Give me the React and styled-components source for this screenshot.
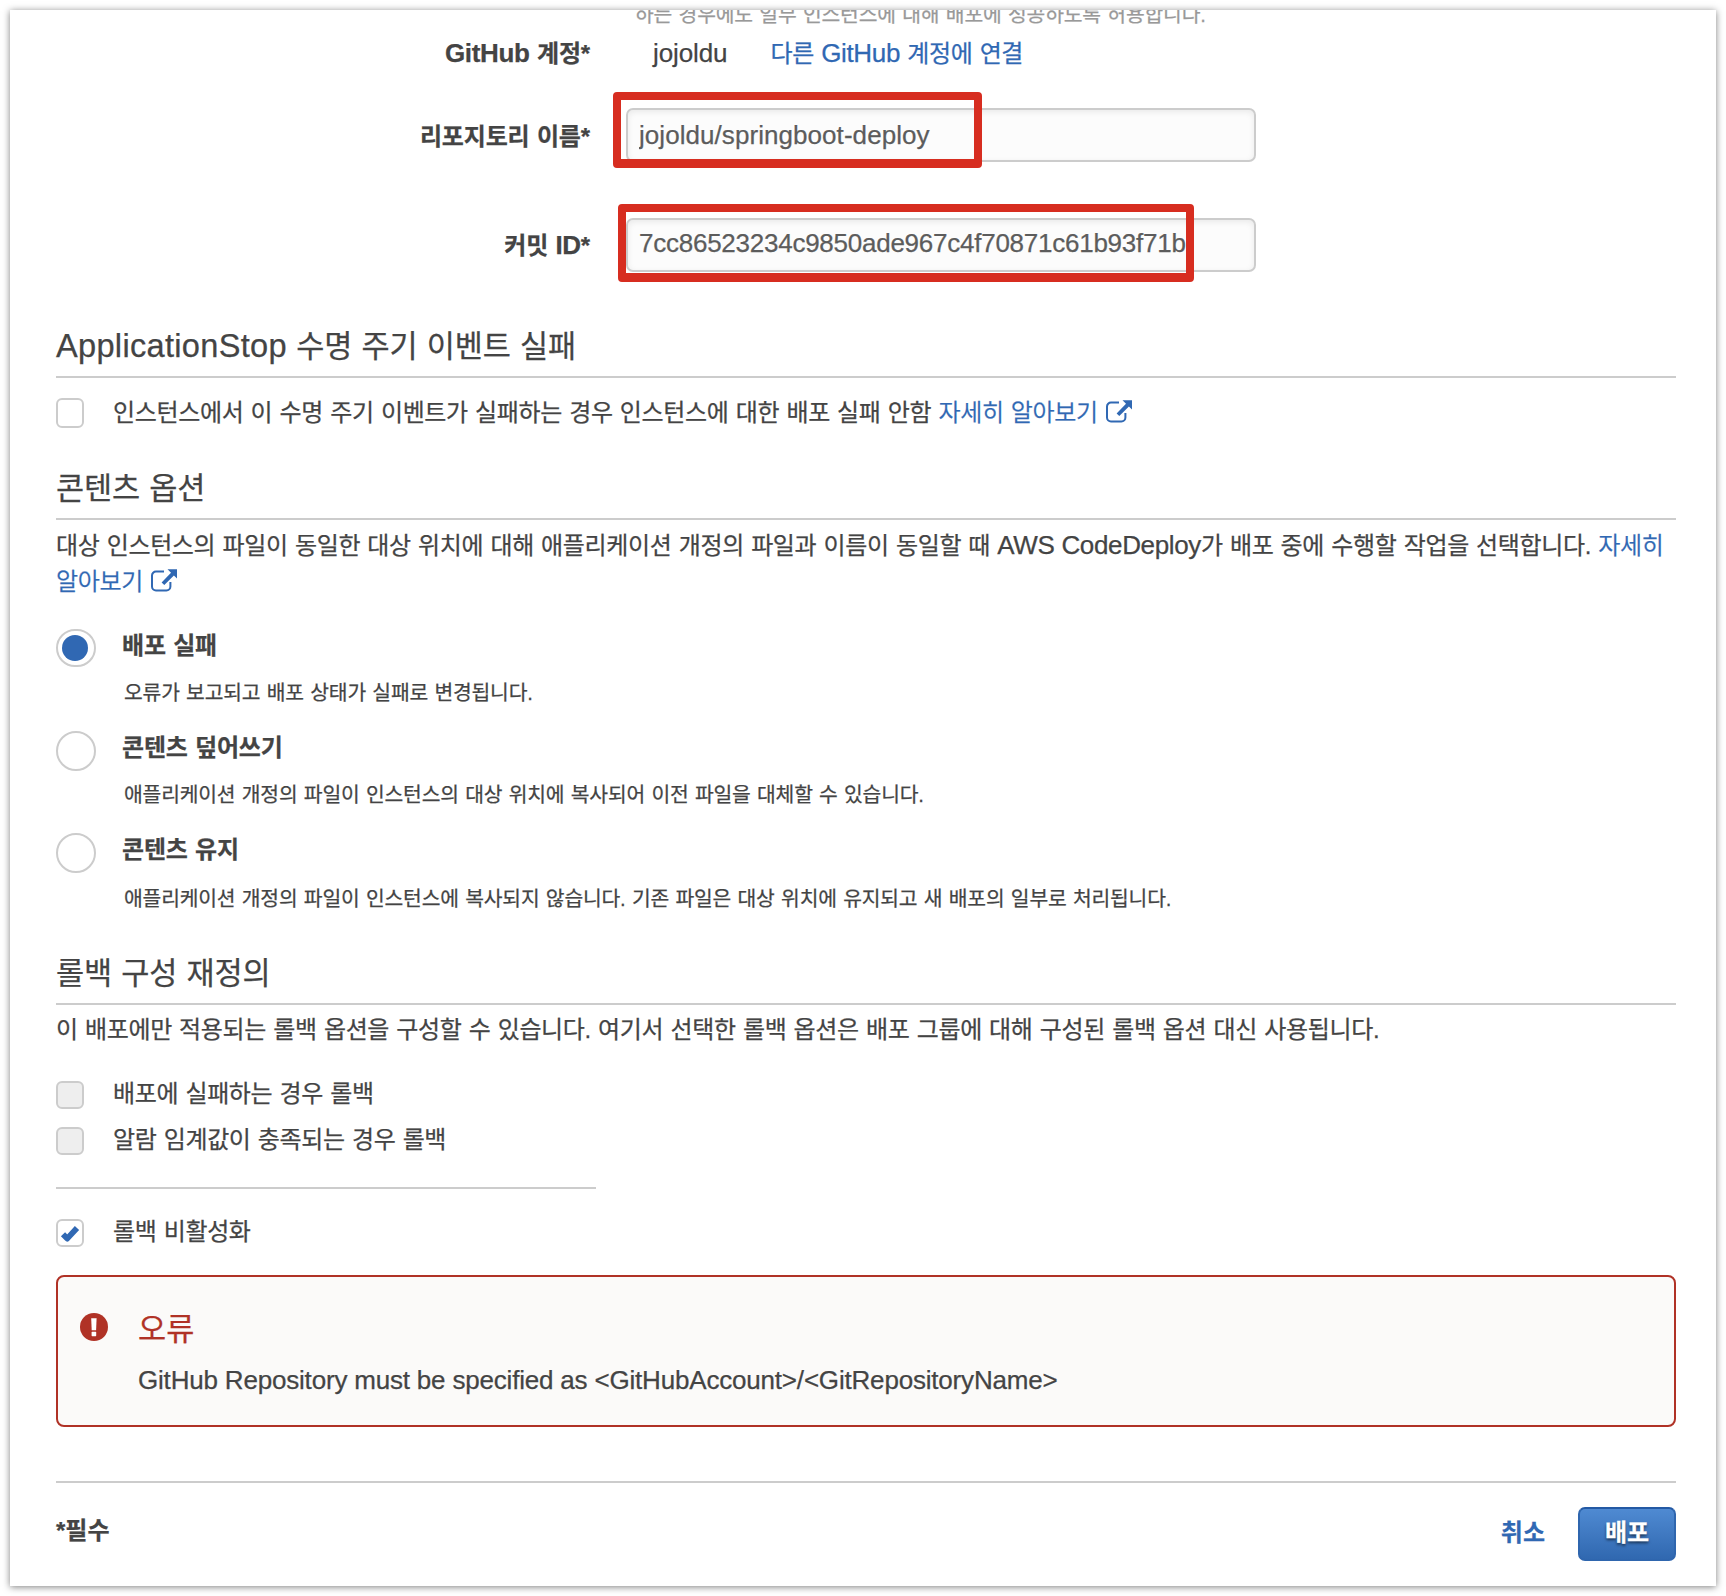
import React from "react";
import styled, { createGlobalStyle } from "styled-components";

const Global = createGlobalStyle`
  * { box-sizing: border-box; }
  body {
    margin: 0;
    background: #fff;
    color: #444;
    font-family: "Liberation Sans", "Noto Sans CJK KR", sans-serif;
    font-size: 24px;
    letter-spacing: -0.35px;
    word-spacing: 0.9px;
    -webkit-text-stroke: 0.25px currentColor;
    overflow: hidden;
  }
`;

const Panel = styled.main`
  width: 1706px;
  height: 1576px;
  margin: 10px;
  padding: 0 40px 0 46px;
  overflow: hidden;
  background: #fff;
  box-shadow: 0 1px 7px rgba(0, 0, 0, 0.5);
`;

const Latin = styled.span`
  font-size: 26px;
  letter-spacing: ${(p) => p.$track || "-0.35px"};
  word-spacing: 0;
`;

const Link = styled.a`
  color: #3068b3;
  font-weight: ${(p) => p.$weight || 350};
`;

const Hint = styled.p`
  margin: -10px 0 0 579px;
  height: 30px;
  line-height: 30px;
  font-size: 20.4px;
  letter-spacing: -0.17px;
  color: #999;
  white-space: nowrap;
`;

const FieldRow = styled.div`
  display: grid;
  grid-template-columns: 534px 1fr;
  column-gap: 36px;
  align-items: center;
  height: ${(p) => p.$height}px;
  margin-top: ${(p) => p.$top}px;
`;

const FieldLabel = styled.label`
  font-weight: 700;
  text-align: right;
  letter-spacing: -0.15px;
  line-height: 30px;
  padding-top: ${(p) => p.$drop || 0}px;
  white-space: nowrap;
`;

const Account = styled.div`
  display: flex;
  gap: 43px;
  padding-left: 27px;
  line-height: 30px;
  white-space: nowrap;
`;

const Field = styled.div`
  position: relative;
  width: 630px;
  height: 54px;
`;

const Input = styled.input`
  display: block;
  width: 630px;
  height: 54px;
  padding: 0 10px ${(p) => p.$lift || 0}px 11px;
  border: 2px solid #ccc;
  border-radius: 7px;
  background: #fcfcfc;
  box-shadow: inset 0 2px 6px rgba(0, 0, 0, 0.08);
  color: #5c5c5c;
  font-family: inherit;
  font-size: 26px;
  letter-spacing: ${(p) => p.$track};
  outline: none;
`;

const Highlight = styled.div`
  position: absolute;
  left: ${(p) => p.$x}px;
  top: ${(p) => p.$y}px;
  width: ${(p) => p.$w}px;
  height: ${(p) => p.$h}px;
  border: 8px solid #d72d20;
  border-bottom-width: 9px;
  border-radius: 4px;
  pointer-events: none;
`;

const Heading = styled.h2`
  margin: ${(p) => p.$top}px 0 0;
  height: 62px;
  line-height: 60px;
  border-bottom: 2px solid #ccc;
  font-size: 30.6px;
  font-weight: 400;
  letter-spacing: -0.15px;
  white-space: nowrap;
`;

const HeadingLatin = styled.span`
  font-size: 32.6px;
  letter-spacing: 0.3px;
`;

const Paragraph = styled.p`
  margin: ${(p) => p.$top}px 0 0;
  line-height: 36px;
`;

const CheckRow = styled.label`
  display: flex;
  align-items: center;
  gap: 29px;
  height: ${(p) => p.$height || 28}px;
  margin-top: ${(p) => p.$top}px;
  line-height: 28px;
  white-space: nowrap;
`;

const Box = styled.span`
  display: flex;
  align-items: center;
  justify-content: center;
  width: 28px;
  height: 100%;
  border: 2px solid #ccc;
  border-radius: 6px;
  background: ${(p) => (p.$disabled ? "#eee" : "#fff")};
`;

const CheckText = styled.span`
  padding-bottom: ${(p) => p.$lift || 0}px;
`;

const Options = styled.div`
  margin-top: 29px;
`;

const Option = styled.div`
  display: grid;
  grid-template-columns: 40px 1fr;
  column-gap: 26px;
  align-items: start;
  height: 102px;
`;

const Radio = styled.span`
  display: flex;
  align-items: center;
  justify-content: center;
  height: ${(p) => (p.$selected ? 38 : 40)}px;
  padding-right: 2px;
  border: 2px solid #ccc;
  border-radius: 20px;
`;

const Dot = styled.span`
  width: 26px;
  height: 26px;
  border-radius: 50%;
  background: #3068b3;
`;

const OptionTitle = styled.div`
  font-weight: 700;
  letter-spacing: -0.2px;
  line-height: 34px;
`;

const OptionText = styled.div`
  padding-left: 2px;
  font-size: 20.4px;
  letter-spacing: -0.19px;
  line-height: ${(p) => p.$line || 60}px;
  white-space: nowrap;
`;

const Rule = styled.hr`
  width: ${(p) => p.$width || "100%"};
  height: 2px;
  margin: ${(p) => p.$top}px 0 0;
  border: 0;
  background: #ccc;
`;

const Alert = styled.section`
  display: grid;
  grid-template-columns: 28px 1fr;
  column-gap: 30px;
  align-items: start;
  height: 152px;
  margin-top: 28px;
  padding: 36px 22px;
  border: 2px solid #b03226;
  border-radius: 8px;
  background: #fbfaf9;
`;

const AlertTitle = styled.h3`
  margin: 0;
  line-height: 32px;
  font-size: 30.6px;
  font-weight: 400;
  letter-spacing: 0;
  color: #b03226;
`;

const AlertText = styled.p`
  margin: 18px 0 0;
  line-height: 34px;
`;

const Footer = styled.footer`
  display: flex;
  align-items: center;
  height: 54px;
  margin-top: 24px;
  font-weight: 700;
  letter-spacing: 0;
`;

const Required = styled.span`
  flex: 1;
  padding-bottom: 12px;
`;

const Cancel = styled.button`
  margin-right: 33px;
  padding: 0 0 8px;
  border: 0;
  background: none;
  color: #3068b3;
  font: inherit;
`;

const Submit = styled.button`
  width: 98px;
  height: 54px;
  padding: 0 0 8px;
  border: 2px solid #2f66ae;
  border-top-color: #2359a4;
  border-radius: 7px;
  background: linear-gradient(#4f8ad2, #3068b0);
  color: #fff;
  font: inherit;
  text-shadow: 0 2px 3px rgba(0, 0, 0, 0.6);
`;

const ExternalSvg = styled.svg`
  width: 26px;
  height: 24px;
  margin-left: 1px;
  vertical-align: -2px;
`;

const ExternalIcon = () => (
  <ExternalSvg viewBox="0 0 26 24">
    <path d="M13 3.6H5a4 4 0 0 0-4 4V18.4a4 4 0 0 0 4 4h10.4a4 4 0 0 0 4-4V14" fill="none" stroke="#3068b3" strokeWidth="2" />
    <path d="M16.5 1.2H26v9.4l-3.1-3.1-9.6 9.6-2.7-2.7 9.4-9.6z" fill="#3068b3" />
  </ExternalSvg>
);

const CheckIcon = () => (
  <svg width="20" height="18" viewBox="0 0 20 18">
    <path d="M3 10.2L7.2 14.6 17 4" fill="none" stroke="#3068b3" strokeWidth="5.8" strokeLinejoin="round" />
  </svg>
);

const ErrorIcon = () => (
  <svg width="28" height="28" viewBox="0 0 28 28">
    <circle cx="14" cy="14" r="14" fill="#b03226" />
    <path d="M11.2 5.2h5.4l-.5 12h-4.4z" fill="#fff" />
    <rect x="11.6" y="18.8" width="4.6" height="4.4" rx="0.6" fill="#fff" />
  </svg>
);

const options = [
  { title: "배포 실패", text: "오류가 보고되고 배포 상태가 실패로 변경됩니다.", selected: true },
  { title: "콘텐츠 덮어쓰기", text: "애플리케이션 개정의 파일이 인스턴스의 대상 위치에 복사되어 이전 파일을 대체할 수 있습니다." },
  { title: "콘텐츠 유지", text: "애플리케이션 개정의 파일이 인스턴스에 복사되지 않습니다. 기존 파일은 대상 위치에 유지되고 새 배포의 일부로 처리됩니다.", line: 65 },
];

export default function App() {
  return (
    <>
      <Global />
      <Panel>
        <Hint>하는 경우에도 일부 인스턴스에 대해 배포에 성공하도록 허용합니다.</Hint>
        <FieldRow $height={46} $top={0}>
          <FieldLabel><Latin>GitHub</Latin> 계정*</FieldLabel>
          <Account>
            <Latin $track="-0.1px">jojoldu</Latin>
            <Link $weight={400}>다른 <Latin>GitHub</Latin> 계정에 연결</Link>
          </Account>
        </FieldRow>
        <FieldRow $height={54} $top={32}>
          <FieldLabel $drop={4}>리포지토리 이름*</FieldLabel>
          <Field>
            <Input defaultValue="jojoldu/springboot-deploy" $track="0.06px" />
            <Highlight $x={-13} $y={-16} $w={369} $h={76} />
          </Field>
        </FieldRow>
        <FieldRow $height={54} $top={56}>
          <FieldLabel>커밋 <Latin>ID</Latin>*</FieldLabel>
          <Field>
            <Input defaultValue="7cc86523234c9850ade967c4f70871c61b93f71b" $track="-0.25px" $lift={3} />
            <Highlight $x={-8} $y={-14} $w={576} $h={78} />
          </Field>
        </FieldRow>

        <Heading $top={44}><HeadingLatin>ApplicationStop</HeadingLatin> 수명 주기 이벤트 실패</Heading>
        <CheckRow $top={20} $height={30}>
          <Box />
          <CheckText>
            인스턴스에서 이 수명 주기 이벤트가 실패하는 경우 인스턴스에 대한 배포 실패 안함 <Link>자세히 알아보기 <ExternalIcon /></Link>
          </CheckText>
        </CheckRow>

        <Heading $top={30}>콘텐츠 옵션</Heading>
        <Paragraph $top={7}>
          대상 인스턴스의 파일이 동일한 대상 위치에 대해 애플리케이션 개정의 파일과 이름이 동일할 때 <Latin>AWS CodeDeploy</Latin>가 배포 중에 수행할 작업을 선택합니다. <Link>자세히<br />알아보기 <ExternalIcon /></Link>
        </Paragraph>
        <Options>
          {options.map((o) => (
            <Option key={o.title}>
              <Radio $selected={o.selected}>{o.selected && <Dot />}</Radio>
              <div>
                <OptionTitle>{o.title}</OptionTitle>
                <OptionText $line={o.line}>{o.text}</OptionText>
              </div>
            </Option>
          ))}
        </Options>

        <Heading $top={8}>롤백 구성 재정의</Heading>
        <Paragraph $top={7}>
          이 배포에만 적용되는 롤백 옵션을 구성할 수 있습니다. 여기서 선택한 롤백 옵션은 배포 그룹에 대해 구성된 롤백 옵션 대신 사용됩니다.
        </Paragraph>
        <CheckRow $top={33}><Box $disabled /><CheckText $lift={2}>배포에 실패하는 경우 롤백</CheckText></CheckRow>
        <CheckRow $top={18}><Box $disabled /><CheckText $lift={2}>알람 임계값이 충족되는 경우 롤백</CheckText></CheckRow>
        <Rule $top={32} $width="540px" />
        <CheckRow $top={30}><Box><CheckIcon /></Box><CheckText $lift={2}>롤백 비활성화</CheckText></CheckRow>

        <Alert>
          <ErrorIcon />
          <div>
            <AlertTitle>오류</AlertTitle>
            <AlertText><Latin $track="-0.19px">GitHub Repository must be specified as &lt;GitHubAccount&gt;/&lt;GitRepositoryName&gt;</Latin></AlertText>
          </div>
        </Alert>

        <Rule $top={54} />
        <Footer>
          <Required>*필수</Required>
          <Cancel>취소</Cancel>
          <Submit>배포</Submit>
        </Footer>
      </Panel>
    </>
  );
}
